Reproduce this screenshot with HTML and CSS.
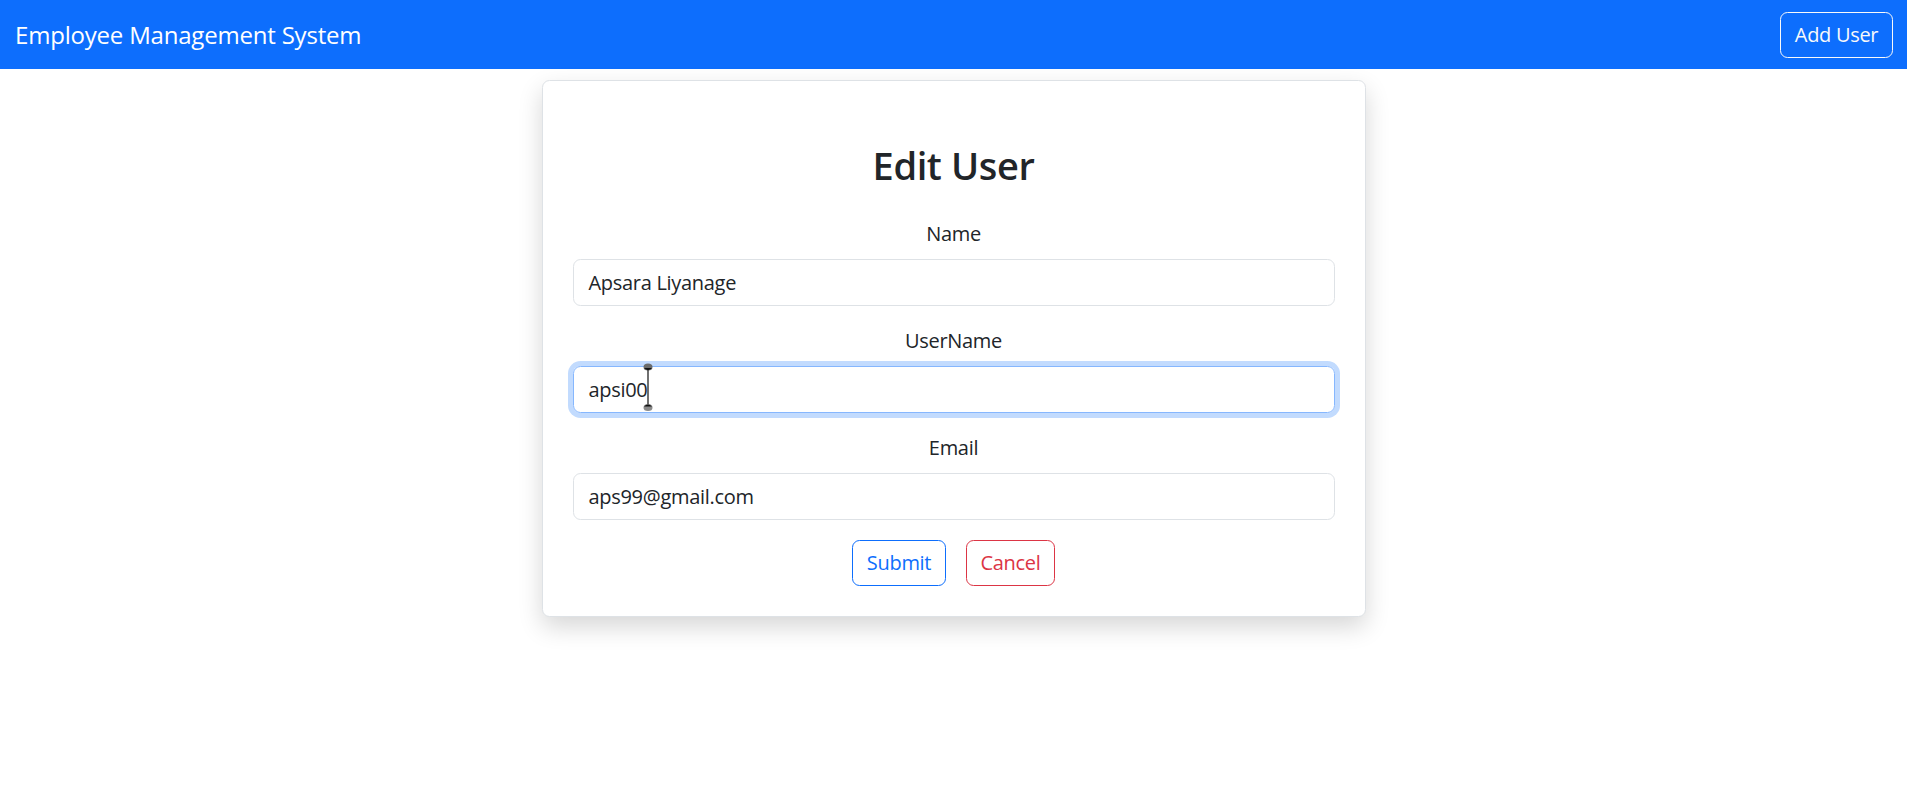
FILE: index.html
```html
<!DOCTYPE html>
<html lang="en">
<head>
<meta charset="utf-8">
<title>Employee Management System</title>
<link rel="stylesheet" href="styles.css">
</head>
<body>
<nav class="navbar">
  <span class="brand">Employee Management System</span>
  <button class="btn btn-light-outline">Add User</button>
</nav>
<main class="container">
  <section class="card">
    <h2 class="title">Edit User</h2>
    <div class="field">
      <label class="label">Name</label>
      <div class="input">Apsara Liyanage</div>
    </div>
    <div class="field">
      <label class="label">UserName</label>
      <div class="input focused"><span class="typed">apsi00<span class="caret"><svg class="handles" width="12" height="52" viewBox="0 0 12 52"><ellipse cx="6" cy="5" rx="4.5" ry="3.6" fill="#6b6b6b"/><path d="M2 6 Q6 10 10 6 Z" fill="#111"/><line x1="6" y1="7" x2="6" y2="43" stroke="#111" stroke-width="1.2"/><ellipse cx="6" cy="45.5" rx="4.5" ry="3.6" fill="#8a8a8a"/><path d="M2 44.5 Q6 40.5 10 44.5 Z" fill="#111"/></svg></span></span></div>
    </div>
    <div class="field">
      <label class="label">Email</label>
      <div class="input">aps99@gmail.com</div>
    </div>
    <div class="actions">
      <button class="btn btn-primary-outline">Submit</button>
      <button class="btn btn-danger-outline">Cancel</button>
    </div>
  </section>
</main>
</body>
</html>
```
FILE: styles.css
```css
* { box-sizing: border-box; }
html, body { margin: 0; padding: 0; }
body {
  font-family: "Open Sans", "Noto Sans", "Liberation Sans", sans-serif;
  font-size: 20px;
  line-height: 1.5;
  color: #212529;
  background: #fff;
  min-height: 805px;
}
.navbar {
  background: #0d6efd;
  height: 69px;
  padding: 0 14px 0 15px;
  display: flex;
  align-items: center;
  justify-content: space-between;
}
.brand {
  color: #fff;
  font-size: 24px;
  letter-spacing: -0.2px;
  line-height: 1.5;
}
.btn {
  font-family: inherit;
  font-size: 20px;
  line-height: 1.5;
  background: transparent;
  border-radius: 7.5px;
  padding: 0;
  height: 46px;
  letter-spacing: -0.3px;
  white-space: nowrap;
  cursor: pointer;
}
.btn-light-outline { color: #f8f9fa; border: 1.25px solid #f8f9fa; width: 113px; }
.btn-primary-outline { color: #0d6efd; border: 1.25px solid #0d6efd; width: 94px; }
.btn-danger-outline { color: #dc3545; border: 1.25px solid #dc3545; width: 89px; }
.container {
  display: flex;
  justify-content: center;
  padding-top: 11px;
}
.card {
  width: 824px;
  padding: 30px;
  border: 1.25px solid #dee2e6;
  border-radius: 7.5px;
  background: #fff;
  box-shadow: 0 10px 24px rgba(0, 0, 0, 0.16);
}
.title {
  margin: 30px;
  text-align: center;
  font-size: 38px;
  font-weight: 600;
  line-height: 48px;
  letter-spacing: -0.4px;
}
.field {
  margin-bottom: 20px;
  display: flex;
  flex-direction: column;
}
.label {
  text-align: center;
  margin-bottom: 10px;
  line-height: 30px;
  letter-spacing: -0.3px;
}
.input {
  height: 47px;
  border: 1.25px solid #dee2e6;
  border-radius: 7.5px;
  padding: 0 15px;
  display: flex;
  align-items: center;
  letter-spacing: -0.3px;
}
.input.focused {
  border-color: #86b7fe;
  box-shadow: 0 0 0 5px rgba(13, 110, 253, 0.25);
}
.typed { position: relative; }
.caret {
  position: absolute;
  right: -6.5px;
  top: -12.5px;
}
.handles { display: block; }
.actions {
  display: flex;
  justify-content: center;
  gap: 20px;
}
```
